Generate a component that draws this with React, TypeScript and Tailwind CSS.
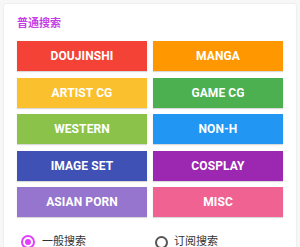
const categories = [
  { label: 'DOUJINSHI', color: 'bg-[#f44336]' },
  { label: 'MANGA', color: 'bg-[#ff9800]' },
  { label: 'ARTIST CG', color: 'bg-[#fbc02d]' },
  { label: 'GAME CG', color: 'bg-[#4caf50]' },
  { label: 'WESTERN', color: 'bg-[#8bc34a]' },
  { label: 'NON-H', color: 'bg-[#2196f3]' },
  { label: 'IMAGE SET', color: 'bg-[#3f51b5]' },
  { label: 'COSPLAY', color: 'bg-[#9c27b0]' },
  { label: 'ASIAN PORN', color: 'bg-[#9575cd]' },
  { label: 'MISC', color: 'bg-[#f06292]' },
]

export default function App() {
  return (
    <div className="h-[247px] overflow-hidden bg-[#f7f7f7] pt-[4px] pl-[4px] font-['Roboto','Noto_Sans_CJK_SC',sans-serif]">
      <div className="w-[292px] h-[260px] bg-white rounded-[2px] shadow-[0_0_2px_rgba(0,0,0,0.12)] px-[13px] pt-[14px]">
        {/* Title */}
        <div className="text-[11px] leading-[12px] font-bold text-[#c63ee6] h-[12px]">普通搜索</div>

        {/* Category buttons */}
        <div className="grid grid-cols-2 gap-x-[6px] gap-y-[6.5px] mt-[11px]">
          {categories.map((c) => (
            <div
              key={c.label}
              className={`${c.color} h-[30px] flex items-center justify-center text-white text-[12px] font-bold tracking-[0.1px] shadow-[0_1px_1px_rgba(0,0,0,0.15)]`}
            >
              {c.label}
            </div>
          ))}
        </div>

        {/* Search mode */}
        <div className="grid grid-cols-2 gap-x-[6px] mt-[18px]">
          <label className="flex items-center gap-[7px] pl-[4px]">
            <span className="w-[14px] h-[14px] rounded-full border-2 border-[#e040fb] flex items-center justify-center">
              <span className="w-[6px] h-[6px] rounded-full bg-[#e040fb]" />
            </span>
            <span className="text-[11px] leading-[14px] text-[#333]">一般搜索</span>
          </label>
          <label className="flex items-center gap-[6px] pl-[2px]">
            <span className="w-[13px] h-[13px] rounded-full border-2 border-[#555]" />
            <span className="text-[11px] leading-[14px] text-[#333]">订阅搜索</span>
          </label>
        </div>
      </div>
    </div>
  )
}
